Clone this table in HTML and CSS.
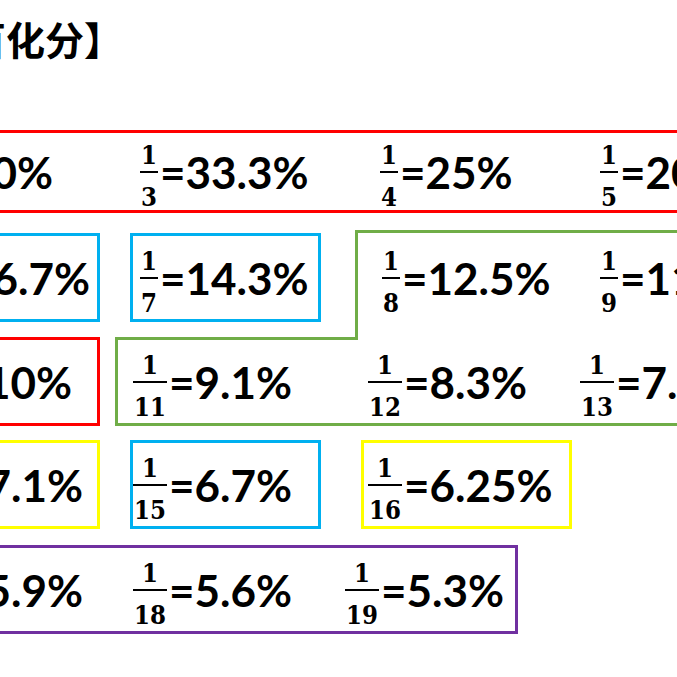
FILE: index.html
```html
<!DOCTYPE html>
<html lang="zh">
<head>
<meta charset="utf-8">
<title>分数化百分数</title>
<link rel="stylesheet" href="styles.css">
</head>
<body>
<div class="slide">
  <h1 class="title">【百化分】</h1>

  <div class="row row1">
    <div class="box red r1box">
      <div class="cell c1a"><span class="eq"><span class="frac"><span class="num">1</span><span class="den">2</span></span><span class="val">=50%</span></span></div>
      <div class="cell c1b"><span class="eq"><span class="frac"><span class="num">1</span><span class="den">3</span></span><span class="val">=33.3%</span></span></div>
      <div class="cell c1c"><span class="eq"><span class="frac"><span class="num">1</span><span class="den">4</span></span><span class="val">=25%</span></span></div>
      <div class="cell"><span class="eq"><span class="frac"><span class="num">1</span><span class="den">5</span></span><span class="val">=20%</span></span></div>
    </div>
  </div>

  <div class="row row2">
    <div class="box blue leftbox pad2a"><span class="eq"><span class="frac"><span class="num">1</span><span class="den">6</span></span><span class="val">=16.7%</span></span></div>
    <div class="box blue midbox pad2b"><span class="eq"><span class="frac"><span class="num">1</span><span class="den">7</span></span><span class="val">=14.3%</span></span></div>
    <div class="box green gtop">
      <div class="cell c2c"><span class="eq"><span class="frac"><span class="num">1</span><span class="den">8</span></span><span class="val">=12.5%</span></span></div>
      <div class="cell c2d"><span class="eq"><span class="frac"><span class="num">1</span><span class="den">9</span></span><span class="val">=11.1%</span></span></div>
    </div>
  </div>

  <div class="row row3">
    <div class="box red leftbox pad3a"><span class="eq"><span class="frac"><span class="num">1</span><span class="den">10</span></span><span class="val">=10%</span></span></div>
    <div class="box green gbot">
      <div class="cell c3b"><span class="eq"><span class="frac"><span class="num">1</span><span class="den">11</span></span><span class="val">=9.1%</span></span></div>
      <div class="cell c3c"><span class="eq"><span class="frac"><span class="num">1</span><span class="den">12</span></span><span class="val">=8.3%</span></span></div>
      <div class="cell"><span class="eq"><span class="frac"><span class="num">1</span><span class="den">13</span></span><span class="val">=7.7%</span></span></div>
    </div>
  </div>

  <div class="row row4">
    <div class="box yellow leftbox pad4a"><span class="eq"><span class="frac"><span class="num">1</span><span class="den">14</span></span><span class="val">=7.1%</span></span></div>
    <div class="box blue midbox"><span class="eq"><span class="frac"><span class="num">1</span><span class="den">15</span></span><span class="val">=6.7%</span></span></div>
    <div class="box yellow ybox"><span class="eq"><span class="frac"><span class="num">1</span><span class="den">16</span></span><span class="val">=6.25%</span></span></div>
  </div>

  <div class="row row5">
    <div class="box purple r5box">
      <div class="cell c5a"><span class="eq"><span class="frac"><span class="num">1</span><span class="den">17</span></span><span class="val">=5.9%</span></span></div>
      <div class="cell c5b"><span class="eq"><span class="frac"><span class="num">1</span><span class="den">18</span></span><span class="val">=5.6%</span></span></div>
      <div class="cell"><span class="eq"><span class="frac"><span class="num">1</span><span class="den">19</span></span><span class="val">=5.3%</span></span></div>
    </div>
  </div>
</div>
</body>
</html>
```

FILE: styles.css
```css
html, body {
  margin: 0;
  padding: 0;
  background: #ffffff;
}

body {
  overflow: hidden;
  color: #000000;
  font-family: Lato, "Noto Sans", sans-serif;
}

.slide {
  width: 677px;
  height: 677px;
  overflow: hidden;
}

.title {
  margin: 19px 0 0 -72px;
  font-family: "Noto Sans CJK SC", "Noto Sans CJK JP", sans-serif;
  font-weight: 700;
  font-size: 39px;
  line-height: 39px;
  white-space: nowrap;
}

.row {
  display: flex;
  align-items: flex-start;
}

.row1 { margin-top: 72px; height: 83px; }
.row2 { margin-top: 17px; height: 92px; }
.row3 { margin-top: 15px; height: 89px; }
.row4 { margin-top: 14px; height: 89px; }
.row5 { margin-top: 16px; height: 89px; }

.box {
  box-sizing: border-box;
  flex-shrink: 0;
  display: flex;
  align-items: center;
  height: 89px;
  border: 3px solid;
}

.red { border-color: #ff0000; }
.blue { border-color: #00b0f0; }
.green { border-color: #70ad47; }
.yellow { border-color: #ffff00; }
.purple { border-color: #7030a0; }

.cell {
  display: flex;
  align-items: center;
  flex-shrink: 0;
}

/* row 1 */
.r1box { margin-left: -100px; width: 900px; height: 83px; }
.c1a { width: 150px; justify-content: flex-end; }
.c1b { margin-left: 87px; width: 240px; }
.c1c { width: 220px; }

/* left clipped boxes */
.leftbox {
  margin-left: -100px;
  width: 200px;
  justify-content: flex-end;
}
.pad2a { padding-right: 7px; }
.pad3a { padding-right: 25px; }
.pad4a { padding-right: 14px; }

.midbox {
  margin-left: 30px;
  width: 191px;
}
.pad2b { padding-left: 7px; }

/* row 2 green (upper part of L shape) */
.gtop {
  margin-left: 34px;
  width: 500px;
  height: 110px;
  border-right: none;
  border-bottom: none;
  align-items: flex-start;
  padding-left: 24px;
}
.gtop .cell {
  height: 83px;
  margin-top: 3px;
}
.row2 .blue { margin-top: 3px; }
.c2c { width: 218px; }

/* row 3 green (lower part of L shape) */
.gbot {
  position: relative;
  margin-left: 15px;
  width: 800px;
  border-top-color: transparent;
  border-right: none;
  padding-left: 15px;
}
.gbot::before {
  content: "";
  position: absolute;
  top: -3px;
  left: -3px;
  width: 243px;
  height: 3px;
  background: #70ad47;
}
.c3b { width: 235px; }
.c3c { width: 212px; }

/* row 4 */
.ybox {
  margin-left: 40px;
  width: 211px;
  padding-left: 4px;
}

/* row 5 */
.r5box { margin-left: -100px; width: 618px; }
.c5a { width: 180px; justify-content: flex-end; }
.c5b { margin-left: 50px; width: 212px; }

/* equation */
.eq {
  display: inline-flex;
  align-items: center;
  white-space: nowrap;
}

.frac {
  display: inline-flex;
  flex-direction: column;
  align-items: stretch;
  text-align: center;
  font-family: "DejaVu Serif Condensed", "DejaVu Serif", serif;
  font-weight: 700;
  font-size: 25.5px;
  line-height: 25px;
}

.num {
  padding: 10px 1px 3px;
  border-bottom: 2px solid #000000;
}

.den {
  padding: 12px 1px 0;
}

.val {
  margin-left: 2px;
  font-family: Lato, "Noto Sans", sans-serif;
  font-weight: 700;
  font-size: 44px;
  line-height: 44px;
}
```
